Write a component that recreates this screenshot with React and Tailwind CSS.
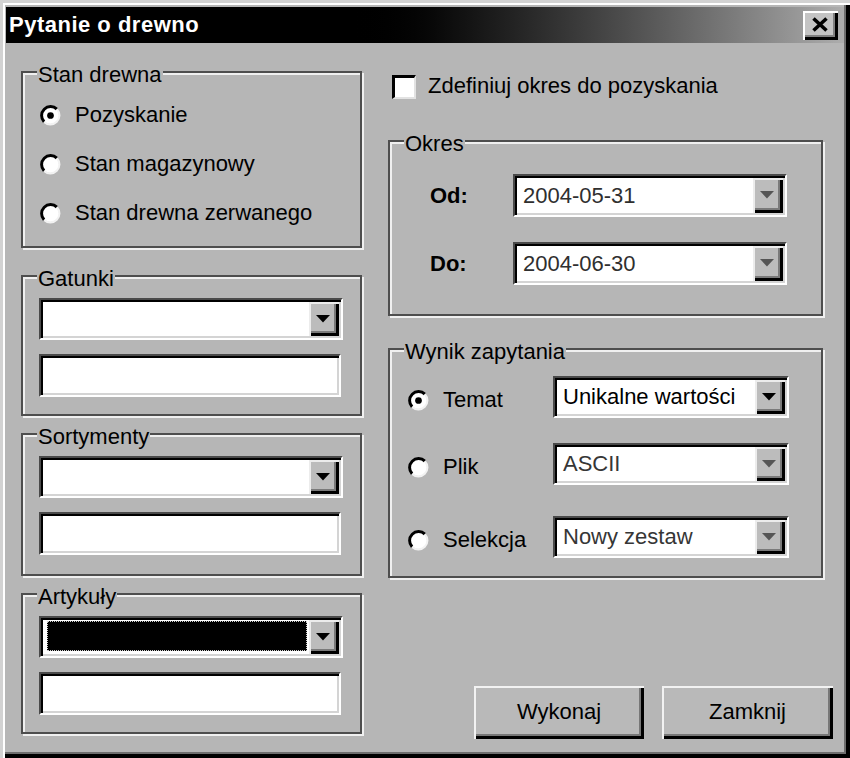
import React from "react";

const SUNKEN =
  "bg-white border-2 border-t-[#4a4a4a] border-l-[#4a4a4a] border-b-white border-r-white shadow-[inset_2px_2px_0_#000,inset_-2px_-2px_0_#d4d4d4] p-[2px]";

function Arrow({ color }) {
  return (
    <div className="w-[30px] h-full shrink-0 flex items-center justify-center bg-[#bcbcbc] shadow-[inset_2px_2px_0_#ececec,inset_-3px_-3px_0_#000,inset_-5px_-5px_0_#7a7a7a]">
      <svg width="16" height="9" viewBox="0 0 16 9" className="-mt-[2px] -ml-[2px]">
        <path d="M1 1H15L8 8.5Z" fill={color} />
      </svg>
    </div>
  );
}

function Combo({ className, text, textClass, arrow = "#000", selected }) {
  return (
    <div className={`flex ${SUNKEN} ${className}`}>
      <div className="flex-1 flex items-center min-w-0 bg-white">
        {selected ? (
          <div className="ml-[4px] mt-[1px] mb-[3px] mr-[2px] self-stretch flex-1 bg-black border border-dotted border-[#d0d0d0]" />
        ) : (
          <span className={`pl-[6px] whitespace-nowrap ${textClass}`}>{text}</span>
        )}
      </div>
      <Arrow color={arrow} />
    </div>
  );
}

function Field({ className }) {
  return <div className={`${SUNKEN} ${className}`} />;
}

function Radio({ checked }) {
  return (
    <svg width="21" height="21" viewBox="0 0 20 20" className="shrink-0">
      <circle cx="10" cy="10" r="8.2" fill="#fff" />
      <path d="M3.92 16.08A8.6 8.6 0 0 1 16.08 3.92" stroke="#000" strokeWidth="2.8" fill="none" />
      <path d="M16.08 3.92A8.6 8.6 0 0 1 3.92 16.08" stroke="#f2f2f2" strokeWidth="2" fill="none" />
      {checked && <circle cx="10" cy="10" r="3.2" fill="#000" />}
    </svg>
  );
}

function Group({ title, className, children }) {
  return (
    <div
      className={`relative border-2 border-[#4e4e4e] shadow-[inset_2px_2px_0_#f0f0f0,2px_2px_0_#f0f0f0] ${className}`}
    >
      <span className="absolute left-[14px] top-[-11px] bg-[#b6b6b6] px-[1px] leading-[26px] whitespace-nowrap">
        {title}
      </span>
      {children}
    </div>
  );
}

function Button({ className, children }) {
  return (
    <div
      className={`flex items-center justify-center bg-[#b9b9b9] shadow-[inset_2px_2px_0_#f2f2f2,inset_-3px_-3px_0_#000,inset_-5px_-5px_0_#777777] ${className}`}
    >
      <span className="-mt-[2px]">{children}</span>
    </div>
  );
}

function ListGroup({ title, className }) {
  return (
    <Group title={title} className={className}>
      <div className="pt-[21px] pl-[16px] flex flex-col">
        <Combo className="w-[304px] h-[42px]" />
        <Field className="mt-[14px] w-[302px] h-[43px]" />
      </div>
    </Group>
  );
}

export default function App() {
  return (
    <div className="w-[850px] h-[758px] bg-[#b6b6b6] font-['Liberation_Sans',Arial,sans-serif] text-[22px] leading-[26px] text-black shadow-[inset_3px_3px_0_#d2d2d2,inset_5px_5px_0_#fff,inset_-4px_-4px_0_#000,inset_-6px_-6px_0_#6e6e6e] flex flex-col overflow-hidden">
      {/* Title bar */}
      <div className="mx-[6px] mt-[7px] h-[36px] flex items-center bg-linear-to-r from-black from-40% to-[#adadad]">
        <span className="pl-[3px] font-bold text-white tracking-[0.5px]">Pytanie o drewno</span>
        <div className="ml-auto mr-[6px] w-[35px] h-[29px] bg-[#c4c4c4] flex items-center justify-center shadow-[inset_2px_2px_0_#fff,inset_-3px_-3px_0_#000,inset_-5px_-5px_0_#808080]">
          <svg width="18" height="15" viewBox="0 0 18 15" className="-mt-[1px] -ml-[1px]">
            <path d="M2.5 1.5L15.5 13.5M15.5 1.5L2.5 13.5" stroke="#000" strokeWidth="3.6" />
          </svg>
        </div>
      </div>

      {/* Body */}
      <div className="flex pl-[21px]">
        {/* Left column */}
        <div className="w-[341px] flex flex-col pt-[28px]">
          <Group title="Stan drewna" className="h-[177px]">
            <div className="pt-[29px] pl-[17px] flex flex-col gap-[23px]">
              <div className="h-[26px] flex items-center gap-[14px]">
                <Radio checked />
                <span>Pozyskanie</span>
              </div>
              <div className="h-[26px] flex items-center gap-[14px]">
                <Radio />
                <span>Stan magazynowy</span>
              </div>
              <div className="h-[26px] flex items-center gap-[14px]">
                <Radio />
                <span>Stan drewna zerwanego</span>
              </div>
            </div>
          </Group>
          <ListGroup title="Gatunki" className="mt-[27px] h-[141px]" />
          <ListGroup title="Sortymenty" className="mt-[17px] h-[143px]" />
          <Group title="Artykuły" className="mt-[17px] h-[141px]">
            <div className="pt-[21px] pl-[16px] flex flex-col">
              <Combo className="w-[304px] h-[42px]" selected />
              <Field className="mt-[14px] w-[302px] h-[43px]" />
            </div>
          </Group>
        </div>

        {/* Right column */}
        <div className="ml-[26px] w-[445px] flex flex-col">
          <div className="mt-[32px] pl-[4px] flex items-center gap-[12px] h-[24px]">
            <div className="w-[24px] h-[24px] bg-white border-t-[3px] border-l-[3px] border-b-2 border-r-2 border-t-black border-l-black border-b-[#e2e2e2] border-r-[#e2e2e2] shrink-0" />
            <span className="-mt-[2px]">Zdefiniuj okres do pozyskania</span>
          </div>

          <Group title="Okres" className="mt-[41px] w-[435px] h-[176px]">
            <div className="pt-[32px] flex flex-col">
              <div className="flex items-center">
                <div className="w-[123px] pl-[40px] font-bold">Od:</div>
                <Combo className="w-[274px] h-[43px]" text="2004-05-31" textClass="text-[#2f2f2f]" arrow="#555555" />
              </div>
              <div className="flex items-center mt-[25px]">
                <div className="w-[123px] pl-[40px] font-bold">Do:</div>
                <Combo className="w-[274px] h-[43px]" text="2004-06-30" textClass="text-[#2f2f2f]" arrow="#555555" />
              </div>
            </div>
          </Group>

          <Group title="Wynik zapytania" className="mt-[32px] w-[435px] h-[230px]">
            <div className="pt-[26px] flex flex-col">
              <div className="flex items-center h-[42px]">
                <div className="w-[163px] pl-[18px] pt-[6px] flex items-center gap-[14px]">
                  <Radio checked />
                  <span>Temat</span>
                </div>
                <Combo className="w-[236px] h-[42px]" text="Unikalne wartości" textClass="text-black" />
              </div>
              <div className="flex items-center h-[42px] mt-[25px]">
                <div className="w-[163px] pl-[18px] pt-[6px] flex items-center gap-[14px]">
                  <Radio />
                  <span>Plik</span>
                </div>
                <Combo className="w-[236px] h-[42px]" text="ASCII" textClass="text-[#363636]" arrow="#555555" />
              </div>
              <div className="flex items-center h-[42px] mt-[31px]">
                <div className="w-[163px] pl-[18px] pt-[6px] flex items-center gap-[14px]">
                  <Radio />
                  <span>Selekcja</span>
                </div>
                <Combo className="w-[236px] h-[42px]" text="Nowy zestaw" textClass="text-[#363636]" arrow="#555555" />
              </div>
            </div>
          </Group>

          <div className="mt-[108px] flex justify-end gap-[18px]">
            <Button className="w-[170px] h-[53px]">Wykonaj</Button>
            <Button className="w-[171px] h-[53px]">Zamknij</Button>
          </div>
        </div>
      </div>
    </div>
  );
}
